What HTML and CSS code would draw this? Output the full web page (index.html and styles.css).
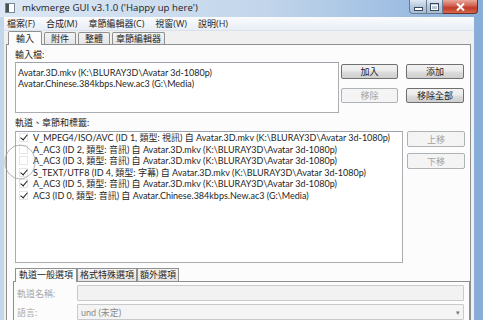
FILE: index.html
```html
<!DOCTYPE html>
<html>
<head>
<meta charset="utf-8">
<link rel="stylesheet" href="styles.css">
</head>
<body>
<div class="titlebar">
  <svg class="appicon" width="10" height="10" viewBox="0 0 10 10"><rect x="0.5" y="0.5" width="9" height="9" fill="#fff" stroke="#7a8796"/><rect x="1" y="1" width="3" height="8" fill="#4a4f56"/></svg>
  <span class="title">mkvmerge GUI v3.1.0 ('Happy up here')</span>
  <div class="caps">
    <div class="cap cap-min"><svg width="9" height="4" viewBox="0 0 9 4"><rect x="0.5" y="0.5" width="8" height="3" fill="#fff" stroke="#3c4a5c"/></svg></div>
    <div class="cap cap-max"><svg width="9" height="8" viewBox="0 0 9 8"><rect x="0.5" y="0.5" width="8" height="7" fill="none" stroke="#3c4a5c"/><rect x="1.5" y="2.5" width="6" height="4" fill="none" stroke="#fff"/></svg></div>
    <div class="cap cap-close"><svg width="9" height="8" viewBox="0 0 9 8"><path d="M1 0.5 L8 7.5 M8 0.5 L1 7.5" stroke="#fff" stroke-width="2"/></svg></div>
  </div>
</div>
<div class="client">
  <div class="menubar">
    <span>檔案(F)</span><span>合成(M)</span><span>章節編輯器(C)</span><span>視窗(W)</span><span>說明(H)</span>
  </div>
  <div class="tabs">
    <div class="tab active">輸入</div><div class="tab">附件</div><div class="tab">整體</div><div class="tab wide">章節編輯器</div>
  </div>
  <div class="page">
    <div class="lbl">輸入檔:</div>
    <div class="row1">
      <div class="listbox files">
        <div class="line">Avatar.3D.mkv (K:\BLURAY3D\Avatar 3d-1080p)</div>
        <div class="line">Avatar.Chinese.384kbps.New.ac3 (G:\Media)</div>
      </div>
      <div class="btngrid">
        <div class="btn">加入</div><div class="btn">添加</div>
        <div class="btn disabled">移除</div><div class="btn">移除全部</div>
      </div>
    </div>
    <div class="lbl lbl2">軌道、章節和標籤:</div>
    <div class="row2">
      <div class="listbox tracks">
        <div class="track"><span class="cb on"></span>V_MPEG4/ISO/AVC (ID 1, 類型: 視訊) 自 Avatar.3D.mkv (K:\BLURAY3D\Avatar 3d-1080p)</div>
        <div class="track"><span class="cb"></span>A_AC3 (ID 2, 類型: 音訊) 自 Avatar.3D.mkv (K:\BLURAY3D\Avatar 3d-1080p)</div>
        <div class="track"><span class="cb"></span>A_AC3 (ID 3, 類型: 音訊) 自 Avatar.3D.mkv (K:\BLURAY3D\Avatar 3d-1080p)</div>
        <div class="track"><span class="cb on"></span>S_TEXT/UTF8 (ID 4, 類型: 字幕) 自 Avatar.3D.mkv (K:\BLURAY3D\Avatar 3d-1080p)</div>
        <div class="track"><span class="cb on"></span>A_AC3 (ID 5, 類型: 音訊) 自 Avatar.3D.mkv (K:\BLURAY3D\Avatar 3d-1080p)</div>
        <div class="track"><span class="cb on"></span>AC3 (ID 0, 類型: 音訊) 自 Avatar.Chinese.384kbps.New.ac3 (G:\Media)</div>
      </div>
      <div class="btncol">
        <div class="btn disabled tall">上移</div>
        <div class="btn disabled">下移</div>
      </div>
    </div>
    <div class="subtabs">
      <div class="stab active">軌道一般選項</div><div class="stab">格式特殊選項</div><div class="stab">額外選項</div>
    </div>
    <div class="subpanel">
      <div class="frow"><span class="flbl">軌道名稱:</span><div class="input"></div></div>
      <div class="frow"><span class="flbl">語言:</span><div class="input combo"><span>und (未定)</span><span class="arrow">▾</span></div></div>
    </div>
  </div>
</div>
<svg class="annot" width="36" height="40" viewBox="0 0 36 40"><ellipse cx="17" cy="19" rx="15" ry="17" fill="none" stroke="#9c9c9c" stroke-width="0.9" opacity="0.85"/></svg>
</body>
</html>
```

FILE: styles.css
```css
* { box-sizing: border-box; }
html, body { margin: 0; padding: 0; }
body {
  width: 483px; height: 320px; overflow: hidden; position: relative;
  background: linear-gradient(to right, #c4d6ea 0%, #bcd1e9 55%, #9dbde2 80%, #86acd8 100%);
  font-family: "Open Sans", "Noto Sans CJK TC", sans-serif;
  font-size: 9px; color: #1e1e1e;
}
.titlebar {
  height: 17px; display: flex; align-items: center; position: relative;
  background: linear-gradient(to right, rgba(230,238,247,0.7), rgba(200,218,238,0.3) 60%, rgba(140,175,215,0.2));
}
.appicon { margin-left: 5px; margin-top: -2px; }
.title { margin-left: 7px; font-size: 9.6px; color: #1b1b1b; margin-top: -3px; letter-spacing: 0.05px; }
.caps { position: absolute; right: 5px; top: 0; display: flex; }
.cap { height: 14px; display: flex; align-items: center; justify-content: center; border: 1px solid #6a7c94; border-top: none; }
.cap-min { width: 18px; border-radius: 0 0 0 4px; background: linear-gradient(#dfe8f3, #b6c8dc 50%, #a7bcd4); padding-top: 4px; }
.cap-max { width: 16px; border-left: none; background: linear-gradient(#dfe8f3, #b6c8dc 50%, #a7bcd4); }
.cap-close { width: 35px; border-left: none; border-color: #6d2d26; border-radius: 0 0 4px 0; background: linear-gradient(#e9a99c, #d1604f 45%, #c23a28 60%, #d56a4c); }
.client {
  margin: 0 9px 0 4px; height: 303px; background: #f0f0f0;
  display: flex; flex-direction: column;
}
.menubar {
  height: 16px; display: flex; align-items: center; gap: 11px; padding-left: 3px;
  background: linear-gradient(#fafbfd, #e8eef6); border-bottom: 1px solid #dbe2ec;
  color: #1e1e1e;
}
.tabs { height: 15px; display: flex; align-items: flex-end; padding-left: 4px; position: relative; z-index: 1; }
.tab {
  height: 12px; line-height: 11px; padding: 0 6px; margin-right: 2px; white-space: nowrap;
  border: 1px solid #8e8f8f; border-bottom: none; border-radius: 2px 2px 0 0;
  background: linear-gradient(#f3f3f3, #e5e5e5);
}
.tab.wide { padding: 0 3px; }
.tab.active { height: 14px; line-height: 13px; padding: 0 7px; background: #fcfcfc; margin-bottom: -1px; }
.page {
  margin: 0 3px 0 2px; flex: 1; background: #fcfcfc;
  border: 1px solid #8e8f8f; border-bottom: none;
  padding: 4px 0 0 8px;
  font-family: Lato, "Noto Sans CJK TC", sans-serif;
}
.lbl { height: 12px; line-height: 12px; }
.lbl2 { margin-top: 4px; }
.row1 { display: flex; margin-top: 1px; }
.listbox { background: #fff; border: 1px solid #abadb3; border-top-color: #9ea2aa; }
.files { width: 324px; height: 51px; padding: 4px 2px 0 2px; }
.line { height: 11px; line-height: 11px; white-space: nowrap; }
.btngrid { margin: 2px 0 0 2px; display: grid; grid-template-columns: 57px 58px; grid-auto-rows: 15px; column-gap: 8px; row-gap: 9px; align-content: start; }
.btn {
  display: flex; align-items: center; justify-content: center; height: 15px;
  border: 1px solid #707070; border-radius: 2px;
  background: linear-gradient(#f2f2f2 0%, #ebebeb 48%, #dddddd 52%, #cfcfcf 100%);
  color: #1e1e1e;
}
.btn.disabled { border-color: #adb2b5; background: #f4f4f4; color: #a3a3a3; }
.row2 { display: flex; margin-top: 2px; }
.tracks { width: 388px; height: 132px; padding: 0 0 0 1px; overflow: hidden; }
.track { height: 11.5px; line-height: 11.5px; display: flex; align-items: center; white-space: nowrap; }
.cb { width: 9px; height: 9px; margin: 0 5px 0 2px; flex: none; border: 1px solid #e6e6e6; background: #fff; position: relative; }
.cb.on::after {
  content: ""; position: absolute; left: 2px; top: -1px; width: 3px; height: 6px;
  border-right: 1.7px solid #1c1c1c; border-bottom: 1.7px solid #1c1c1c; transform: rotate(40deg);
}
.btncol { margin-left: 4px; width: 58px; display: flex; flex-direction: column; gap: 6px; }
.btncol .tall { height: 17px; }
.btncol .btn { height: 16px; }
.subtabs { display: flex; margin-top: 4px; height: 14px; align-items: flex-end; position: relative; z-index: 1; }
.stab {
  height: 13px; line-height: 12px; padding: 0 2px; white-space: nowrap;
  border: 1px solid #8e8f8f; border-bottom: none; background: linear-gradient(#f3f3f3, #e6e6e6);
}
.stab.active { background: #fcfcfc; height: 14px; margin-bottom: -1px; padding: 0 3px; }
.subpanel { margin-left: -2px; width: 457px; border: 1px solid #8e8f8f; border-bottom: none; padding: 3px 0 0 3px; height: 40px; background: #fcfcfc; }
.frow { display: flex; align-items: center; height: 16px; margin-bottom: 3px; }
.flbl { width: 60px; color: #a8a8a8; }
.input { width: 387px; height: 16px; border: 1px solid #c8cacd; background: #f2f2f2; border-radius: 1px; }
.combo { display: flex; align-items: center; padding-left: 3px; color: #8a8a8a; justify-content: space-between; padding-right: 3px; background: #f4f4f4; }
.arrow { font-size: 7px; color: #777; }
.annot { position: absolute; left: 3px; top: 143px; }
```
